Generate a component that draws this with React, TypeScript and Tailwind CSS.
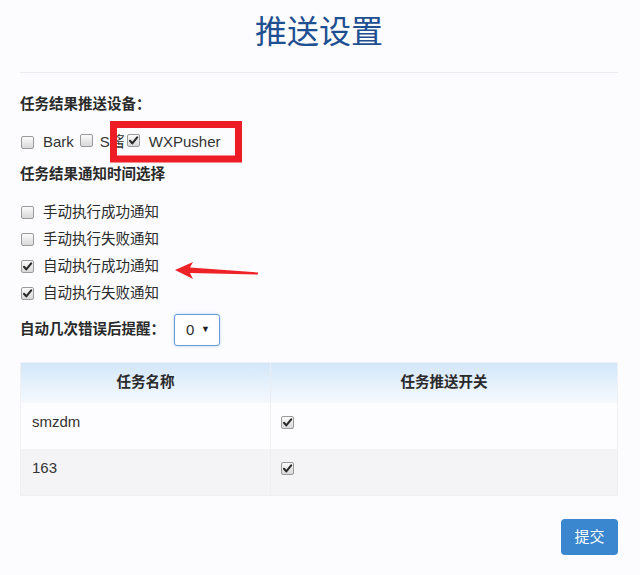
import React from 'react';

const font = "font-['Liberation_Sans','Noto_Sans_CJK_SC',sans-serif]";

function Box({ checked }: { checked?: boolean }) {
  return (
    <span className="relative inline-block h-[13px] w-[13px] shrink-0 rounded-[2px] border border-[#9a9a9a] bg-gradient-to-b from-[#fbfbfb] to-[#d8d8d8]">
      {checked && (
        <svg viewBox="0 0 13 13" className="absolute left-[-1px] top-[-1px] h-[13px] w-[13px]">
          <path d="M3 6.8 L5.3 9.4 L10.2 3.4" fill="none" stroke="#2b2b2b" strokeWidth="2.1" strokeLinejoin="round" strokeLinecap="round" />
        </svg>
      )}
    </span>
  );
}

const notices = [
  { label: '手动执行成功通知', on: false },
  { label: '手动执行失败通知', on: false },
  { label: '自动执行成功通知', on: true },
  { label: '自动执行失败通知', on: true },
];

const tasks = ['smzdm', '163'];

export default function App() {
  return (
    <main className={`relative min-h-[575px] w-[640px] overflow-hidden bg-[#fcfcfe] pl-5 pr-[22px] text-[14.5px] text-[#2a2a2a] ${font}`}>
      <h1 className="pt-2 text-center text-[32px] leading-[48px] text-[#1e4f91]">推送设置</h1>
      <hr className="mt-4 border-t border-[#ececf0]" />

      <div className="mt-[21px] font-bold leading-[21px]">任务结果推送设备：</div>
      <div className="mt-[17px] flex h-[21px] items-center pl-px text-[15px] text-[#333]">
        <Box />
        <span className="ml-[9px]">Bark</span>
        <span className="ml-[6px]"><Box /></span>
        <span className="ml-[7px]">S酱</span>
        <span className="ml-[2px]"><Box checked /></span>
        <span className="ml-[9px]">WXPusher</span>
      </div>

      <div className="mt-[11px] font-bold leading-[21px]">任务结果通知时间选择</div>
      <div className="mt-[14px]">
        {notices.map(n => (
          <div key={n.label} className="flex h-[27px] items-center pl-px">
            <Box checked={n.on} />
            <span className="ml-[9px]">{n.label}</span>
          </div>
        ))}
      </div>

      <div className="mt-[7px] flex h-8 items-center">
        <span className="font-bold">自动几次错误后提醒：</span>
        <div className="ml-[9px] flex h-8 w-[46px] items-center justify-between rounded-[3px] border border-[#6a9ad8] bg-white pl-[11px] pr-[9px] shadow-[0_0_3px_rgba(102,175,233,0.5)]">
          <span className="text-[15px]">0</span>
          <span className="text-[9px] text-[#222]">▼</span>
        </div>
      </div>

      <table className="mt-4 w-full border-collapse border border-[#f0f0f3]">
        <thead>
          <tr className="h-10 bg-gradient-to-b from-[#d3e7f9] to-[#f6f9fd]">
            <th className="w-[250px] text-center font-bold">任务名称</th>
            <th className="border-l border-[#eaeef3] text-center font-bold">任务推送开关</th>
          </tr>
        </thead>
        <tbody>
          {tasks.map((t, i) => (
            <tr key={t} className={i % 2 === 0 ? 'h-[46px] bg-[#fdfdff]' : 'h-[47px] bg-[#f4f4f7]'}>
              <td className="pb-[7px] pl-[11px] text-[15px] text-[#333]">{t}</td>
              <td className="border-l border-[#efeff2] pb-[7px] pl-[10px]">
                <div className="flex items-center"><Box checked /></div>
              </td>
            </tr>
          ))}
        </tbody>
      </table>

      <div className="mt-[23px] flex justify-end">
        <button className="h-9 w-[57px] rounded-[4px] bg-[#3a86cf] text-[15px] text-white">提交</button>
      </div>

      <svg className="pointer-events-none absolute left-0 top-0" width="640" height="575">
        <rect x="113.5" y="124.5" width="125" height="34.5" fill="none" stroke="#ee1c24" strokeWidth="7" />
        <polygon points="175,270 193,262 190,267.5 258,272.5 258,274.5 190,273 193,279" fill="#ee2328" />
      </svg>
    </main>
  );
}
